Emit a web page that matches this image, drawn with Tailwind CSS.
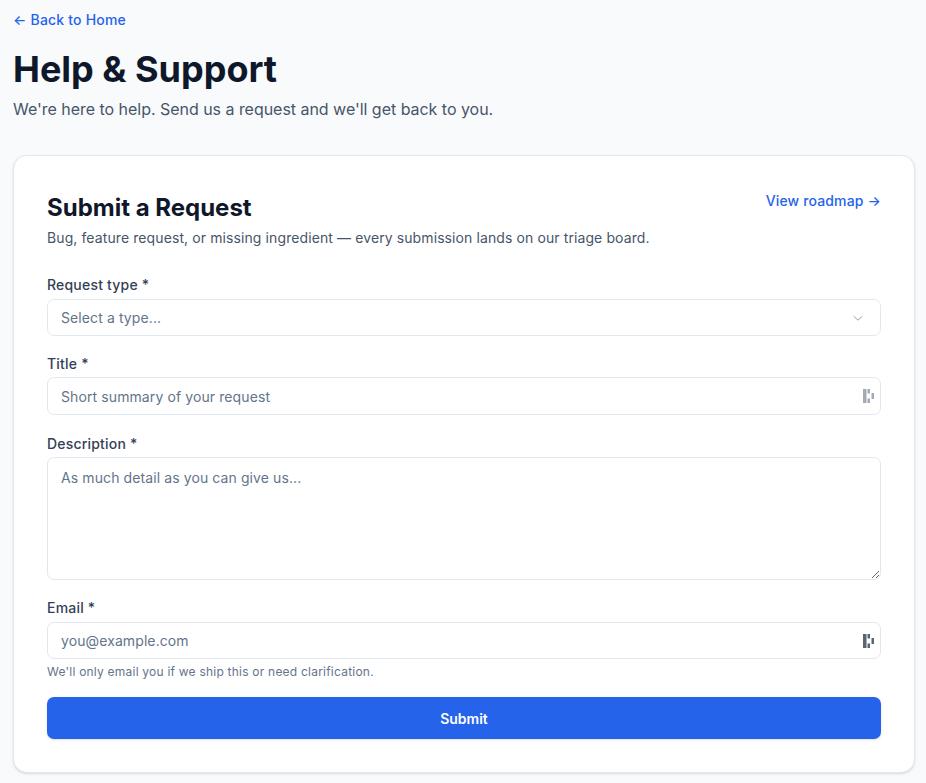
<!DOCTYPE html>
<html lang="en">
<head>
<meta charset="UTF-8">
<meta name="viewport" content="width=device-width, initial-scale=1.0">
<script src="https://cdn.jsdelivr.net/npm/@tailwindcss/browser@4"></script>
<title>Help &amp; Support</title>
</head>
<body class="bg-[#f8fafc] font-['Inter',sans-serif] overflow-hidden">
<div class="h-[783px] pl-[13px] pr-[11px] pt-[11px]">
  <a href="#" class="block text-[14px] leading-[18px] font-medium tracking-[0.2px] text-[#2563eb]">← Back to Home</a>
  <h1 class="mt-[18px] text-[36px] leading-[44px] font-bold text-[#0f172a]">Help &amp; Support</h1>
  <p class="mt-[6px] text-[16px] leading-[24px] tracking-[-0.03px] text-[#475569]">We're here to help. Send us a request and we'll get back to you.</p>

  <div class="mt-[34px] h-[618px] bg-white border border-[#e2e8f0] rounded-[14px] shadow-sm px-[33px] pt-[34px]">
    <div class="flex justify-between items-start">
      <div>
        <h2 class="text-[24px] leading-[36px] font-bold text-[#0f172a]">Submit a Request</h2>
        <p class="mt-[2px] text-[14px] leading-[20px] tracking-[0.1px] text-[#475569]">Bug, feature request, or missing ingredient — every submission lands on our triage board.</p>
      </div>
      <a href="#" class="mt-[2px] text-[14px] leading-[18px] font-medium tracking-[0.15px] text-[#2563eb]">View roadmap →</a>
    </div>

    <form>
      <label class="block mt-[27px] text-[14px] leading-[20px] font-medium tracking-[0.2px] text-[#334155]">Request type *</label>
      <div class="mt-[4px] h-[37px] flex items-center justify-between border border-[#e2e8f0] rounded-[7px] pl-[13px] pr-[16px] text-[14px] tracking-[0.1px] text-[#64748b]">
        <span>Select a type...</span>
        <svg class="w-[12px] h-[12px] text-[#94a3b8]" viewBox="0 0 12 12" fill="none" stroke="currentColor" stroke-width="1" stroke-linecap="round" stroke-linejoin="round"><path d="M2 4.500 6 8.200 10 4.500"/></svg>
      </div>

      <label class="block mt-[18px] text-[14px] leading-[20px] font-medium tracking-[0.2px] text-[#334155]">Title *</label>
      <div class="mt-[3px] h-[38px] flex items-center justify-between border border-[#e2e8f0] rounded-[7px] pl-[13px] pr-[5px]">
        <input type="text" placeholder="Short summary of your request" class="flex-1 min-w-0 outline-none text-[14px] tracking-[0.1px] placeholder:text-[#64748b]">
        <svg class="w-[12px] h-[16px] text-[#a3aab5]" viewBox="0 0 12 16" fill="currentColor"><path d="M0 1h3.500v14H0zM4.500 1H7v4.500H4.500zM4.500 10.500H7V15H4.500zM8.500 5H11v6H8.500z"/></svg>
      </div>

      <label class="block mt-[19px] text-[14px] leading-[20px] font-medium tracking-[0.2px] text-[#334155]">Description *</label>
      <textarea rows="4" placeholder="As much detail as you can give us..." class="block mt-[3px] w-full h-[123px] border border-[#e2e8f0] rounded-[7px] px-[13px] py-[10px] outline-none text-[14px] leading-[20px] tracking-[0.1px] placeholder:text-[#64748b]"></textarea>

      <label class="block mt-[18px] text-[14px] leading-[20px] font-medium tracking-[0.2px] text-[#334155]">Email *</label>
      <div class="mt-[4px] h-[37px] flex items-center justify-between border border-[#e2e8f0] rounded-[7px] pl-[13px] pr-[5px]">
        <input type="email" placeholder="you@example.com" class="flex-1 min-w-0 outline-none text-[14px] tracking-[0.1px] placeholder:text-[#64748b]">
        <svg class="w-[12px] h-[16px] text-[#5b6472]" viewBox="0 0 12 16" fill="currentColor"><path d="M0 1h3.500v14H0zM4.500 1H7v4.500H4.500zM4.500 10.500H7V15H4.500zM8.500 5H11v6H8.500z"/></svg>
      </div>
      <p class="mt-[5px] text-[12px] leading-[16px] tracking-[0.22px] text-[#64748b]">We'll only email you if we ship this or need clarification.</p>

      <button type="button" class="block mt-[17px] w-full h-[42px] rounded-[7px] bg-[#2563eb] shadow-sm text-white text-[14px] font-semibold">Submit</button>
    </form>
  </div>
</div>
</body>
</html>
